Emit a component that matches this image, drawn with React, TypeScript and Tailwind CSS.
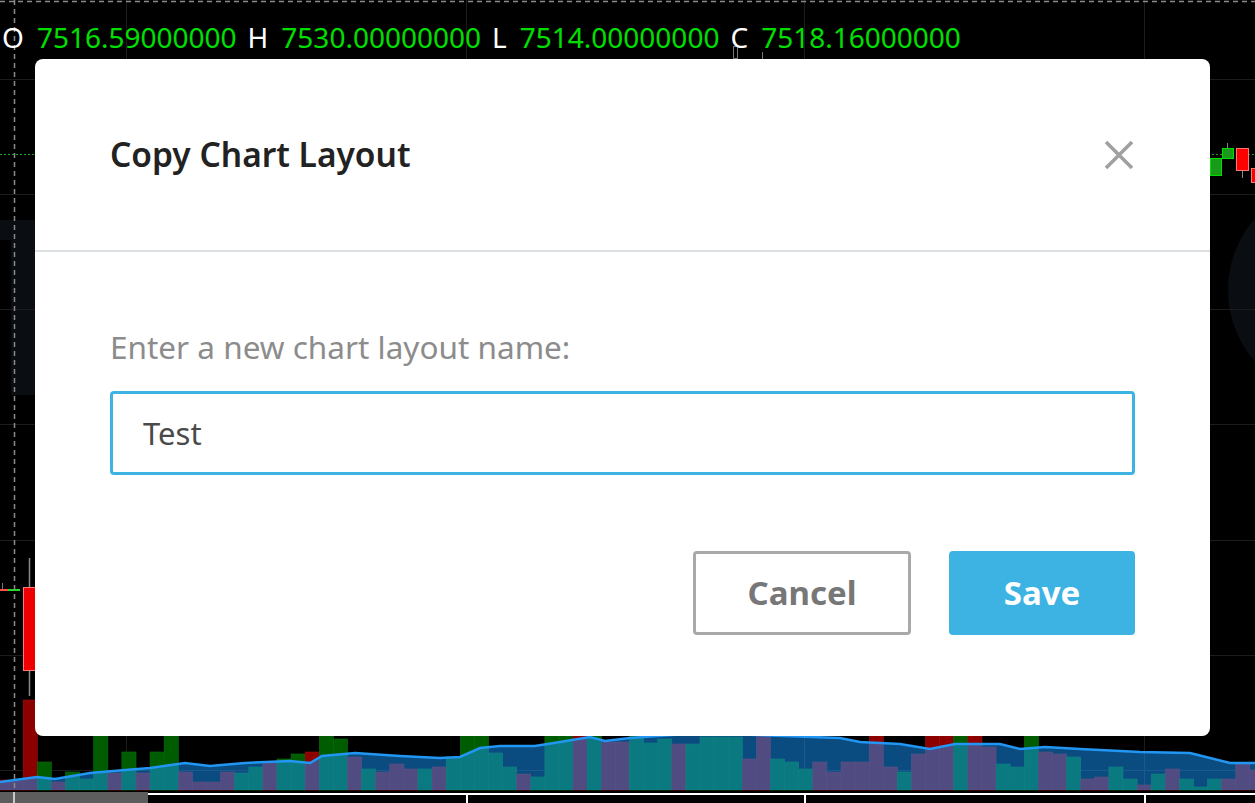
const font = { fontFamily: '"Noto Sans", "Open Sans", sans-serif' };

// volume bars: [top y, r = down candle / g = up candle]
const bars: [number, "r" | "g"][] = [
  [780, "r"], [781, "r"], [700, "r"], [762, "g"], [782, "r"], [772, "g"], [779, "g"], [700, "g"],
  [773, "r"], [752, "g"], [773, "r"], [752, "g"], [700, "g"], [772, "r"], [782, "r"], [782, "r"],
  [772, "r"], [773, "g"], [767, "g"], [762, "r"], [759, "g"], [754, "g"], [752, "r"], [700, "g"],
  [739, "g"], [757, "r"], [769, "g"], [772, "r"], [764, "r"], [769, "r"], [769, "g"], [767, "r"],
  [757, "g"], [700, "g"], [700, "g"], [753, "g"], [767, "g"], [774, "r"], [777, "g"], [700, "g"],
  [720, "g"], [700, "r"], [730, "g"], [742, "r"], [742, "r"], [736, "g"], [743, "g"], [739, "g"],
  [744, "r"], [744, "g"], [737, "g"], [737, "g"], [737, "g"], [759, "r"], [700, "r"], [759, "g"],
  [762, "g"], [769, "g"], [762, "r"], [772, "r"], [762, "r"], [762, "r"], [700, "r"], [767, "r"],
  [772, "g"], [754, "r"], [700, "r"], [700, "r"], [700, "g"], [700, "r"], [747, "r"], [764, "g"],
  [767, "g"], [700, "g"], [752, "r"], [754, "r"], [757, "g"], [779, "r"], [777, "r"], [767, "g"],
  [779, "g"], [785, "r"], [774, "g"], [769, "r"], [779, "g"], [787, "g"], [779, "g"], [779, "r"],
  [764, "r"], [770, "r"],
];

const avg: [number, number][] = [
  [0, 782], [37, 777], [55, 779], [90, 773], [125, 770], [150, 768], [185, 763], [210, 766],
  [245, 763], [290, 761], [310, 763], [322, 756], [355, 753], [400, 756], [440, 758], [460, 757],
  [480, 748], [500, 746], [535, 746], [560, 742], [590, 737], [605, 741], [630, 738], [700, 733],
  [840, 738], [860, 742], [900, 744], [930, 749], [955, 744], [1000, 744], [1020, 749], [1045, 747],
  [1080, 749], [1140, 752], [1190, 753], [1230, 763], [1255, 763],
];

function Chart() {
  const line = avg.map(([x, y]) => `${x},${y}`).join(" ");
  return (
    <svg className="absolute inset-0" width={1255} height={803} viewBox="0 0 1255 803">
      <rect width={1255} height={803} fill="#000" />
      {/* watermark pieces */}
      <path d="M0,220 H40 V395 H11 V240 H0 Z" fill="#0a0d12" />
      <ellipse cx={1335} cy={290} rx={107} ry={108} fill="#0a0d12" />
      {/* grid */}
      {[79, 194, 309, 424, 540, 655, 770].map((y) => (
        <line key={y} x1={0} x2={1255} y1={y + 0.5} y2={y + 0.5} stroke="#1c1c1c" />
      ))}
      {[126, 466, 804, 1144].map((x) => (
        <line key={x} x1={x + 0.5} x2={x + 0.5} y1={0} y2={790} stroke="#1c1c1c" />
      ))}
      {/* price line */}
      <line x1={0} x2={1255} y1={154.5} y2={154.5} stroke="#1fa01f" strokeDasharray="2 2" />
      {/* small candles top */}
      <rect x={733.5} y={46.5} width={4} height={12} fill="none" stroke="#777" />
      <line x1={762.5} x2={762.5} y1={52} y2={60} stroke="#777" />
      {/* right candles */}
      <rect x={1210.5} y={158.5} width={11} height={17} fill="#1a9a1a" stroke="#00e000" />
      <line x1={1227.5} x2={1227.5} y1={143} y2={148} stroke="#888" />
      <rect x={1222.5} y={148.5} width={11} height={10} fill="#1a9a1a" stroke="#00e000" />
      <line x1={1242.5} x2={1242.5} y1={170} y2={178} stroke="#888" />
      <rect x={1236.5} y={148.5} width={12} height={22} fill="#f00" stroke="#ff7777" />
      <rect x={1251.5} y={168.5} width={12} height={14} fill="#f00" stroke="#ff7777" />
      {/* left candles */}
      <line x1={2.5} x2={2.5} y1={583} y2={590} stroke="#777" />
      <rect x={0} y={589} width={8} height={2} fill="#ff5050" />
      <rect x={8} y={589} width={12} height={2} fill="#22dd22" />
      <line x1={29.5} x2={29.5} y1={558} y2={696} stroke="#888" strokeWidth={1.5} />
      <rect x={23.5} y={587.5} width={12} height={83} fill="#ee0000" stroke="#ff7777" />
      {/* volume */}
      {bars.map(([top, k], i) => (
        <rect
          key={i}
          x={-5 + i * 14.1}
          y={top}
          width={14.1}
          height={790 - top}
          fill={k === "r" ? "#8c0000" : "#005c00"}
          stroke={k === "r" ? "#a01010" : "#0a700a"}
          strokeWidth={0.6}
        />
      ))}
      <polygon points={`0,790 ${line} 1255,790`} fill="rgba(20,150,255,0.5)" />
      <polyline points={line} fill="none" stroke="#2196f3" strokeWidth={2.5} />
      {/* crosshair */}
      <line x1={14.5} x2={14.5} y1={0} y2={790} stroke="#8a8a8a" strokeDasharray="5 4" strokeWidth={1.5} />
      <line x1={0} x2={1255} y1={1.5} y2={1.5} stroke="#8a8a8a" strokeDasharray="5 4" strokeWidth={1.5} />
      {/* time axis */}
      <rect x={0} y={792} width={148} height={11} fill="#5d5d5d" />
      <rect x={13} y={792} width={2} height={11} fill="#c8c8c8" />
      <rect x={148} y={793} width={1107} height={2} fill="#fff" />
      {[466, 804, 1144].map((x) => (
        <rect key={x} x={x} y={793} width={2} height={10} fill="#fff" />
      ))}
    </svg>
  );
}

function Legend() {
  const items = [
    ["O", "7516.59000000"],
    ["H", "7530.00000000"],
    ["L", "7514.00000000"],
    ["C", "7518.16000000"],
  ];
  return (
    <div className="absolute left-[2px] top-[23px] flex gap-[11px] text-[28px] leading-none" style={font}>
      {items.map(([k, v]) => (
        <div key={k} className="flex gap-[13px]">
          <span className="text-white">{k}</span>
          <span className="text-[#00e000]">{v}</span>
        </div>
      ))}
    </div>
  );
}

export default function App() {
  return (
    <div className="relative h-[803px] w-[1255px] overflow-hidden bg-black" style={font}>
      <Chart />
      <Legend />

      <div className="absolute left-[35px] top-[59px] flex h-[677px] w-[1175px] flex-col rounded-[8px] bg-white">
        <div className="flex h-[193px] items-center justify-between border-b-2 border-[#dcdfe2] pl-[75px] pr-[76px]">
          <h2 className="text-[33.5px] font-semibold text-[#222]">Copy Chart Layout</h2>
          <svg width={30} height={30} viewBox="0 0 30 30" className="shrink-0">
            <path d="M2 2 L28 28 M28 2 L2 28" stroke="#a0a0a0" strokeWidth={3.6} />
          </svg>
        </div>

        <div className="flex flex-col px-[75px] pt-[75px]">
          <label className="text-[31.5px] leading-[40px] text-[#8c8c8c]">Enter a new chart layout name:</label>
          <div className="mt-[24px] flex h-[84px] items-center rounded-[4px] border-[3px] border-[#3db3e3] pl-[30px]">
            <span className="text-[31px] text-[#4a4a4a]">Test</span>
          </div>

          <div className="mt-[76px] flex justify-end gap-[38px]">
            <button
              type="button"
              className="h-[84px] w-[218px] rounded-[4px] border-[3px] border-[#a9a9a9] text-[33px] font-bold text-[#777]"
            >
              Cancel
            </button>
            <button
              type="button"
              className="h-[84px] w-[186px] rounded-[4px] bg-[#3db3e4] text-[33px] font-bold text-white"
            >
              Save
            </button>
          </div>
        </div>
      </div>
    </div>
  );
}
